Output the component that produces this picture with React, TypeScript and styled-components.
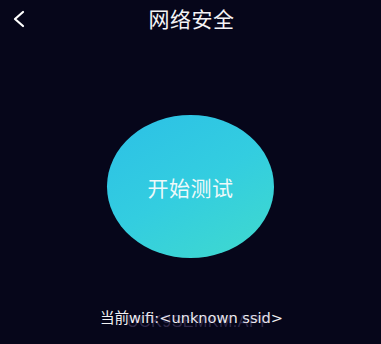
import React from "react";
import styled, { createGlobalStyle } from "styled-components";

const Global = createGlobalStyle`
  html, body { margin: 0; padding: 0; background: #06061a; }
  body { font-family: "Noto Sans CJK SC", "Noto Sans", sans-serif; }
`;

const Screen = styled.div`
  position: relative;
  width: 381px;
  height: 344px;
  overflow: hidden;
  background: #06061a;
  display: flex;
  flex-direction: column;
  color: #fff;
`;

const Header = styled.div`
  height: 42px;
  display: grid;
  grid-template-columns: 60px 1fr 60px;
  align-items: center;
`;

const Back = styled.button`
  background: none;
  border: 0;
  padding: 0 0 0 12px;
  display: flex;
  align-items: center;
  height: 100%;
  margin-top: -4px;
`;

const Title = styled.div`
  text-align: center;
  font-size: 21px;
  line-height: 1;
  margin-top: -6px;
  margin-left: 2px;
  letter-spacing: 0.5px;
  color: #f4f4f6;
`;

const Body = styled.div`
  flex: 1;
  display: flex;
  align-items: flex-start;
  justify-content: center;
  padding-top: 73px;
`;

const StartButton = styled.div`
  width: 167px;
  height: 143px;
  border-radius: 50%;
  background: linear-gradient(150deg, #2cc0e6 0%, #33cde0 50%, #40dacd 100%);
  display: flex;
  align-items: center;
  justify-content: center;
  font-size: 21px;
  color: #eef9fa;
  letter-spacing: 0.5px;
`;

const Footer = styled.div`
  height: 35px;
  display: flex;
  justify-content: center;
  font-family: "DejaVu Sans", "Noto Sans CJK SC", sans-serif;
  font-size: 14.6px;
  line-height: 18px;
  color: #f2f2f4;
  padding-left: 2px;
  box-sizing: border-box;
`;

const Watermark = styled.div`
  position: absolute;
  left: 127px;
  top: 313px;
  width: 142px;
  text-align: center;
  font-family: "Liberation Sans", sans-serif;
  font-size: 16px;
  letter-spacing: 0.5px;
  color: rgba(150, 130, 190, 0.3);
  pointer-events: none;
`;

export default function App() {
  return (
    <>
      <Global />
      <Screen>
        <Header>
          <Back aria-label="back">
            <svg width="14" height="18" viewBox="0 0 14 18">
              <path d="M11 2 L3 9 L11 16" fill="none" stroke="#ffffff" strokeWidth="2.2" strokeLinecap="round" strokeLinejoin="round" />
            </svg>
          </Back>
          <Title>网络安全</Title>
          <div />
        </Header>
        <Body>
          <StartButton>开始测试</StartButton>
        </Body>
        <Footer>当前wifi:&lt;unknown ssid&gt;</Footer>
        <Watermark>UCK9SEMKM.APP</Watermark>
      </Screen>
    </>
  );
}
